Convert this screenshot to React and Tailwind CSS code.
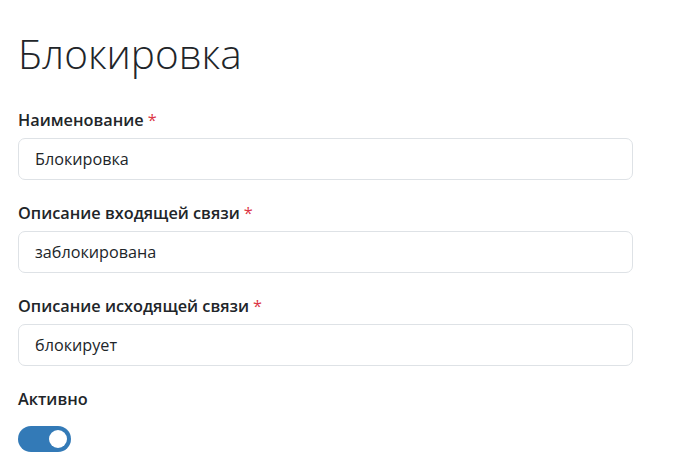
import React, { useState } from "react";

const fields = [
  { id: "name", label: "Наименование", value: "Блокировка" },
  { id: "inbound", label: "Описание входящей связи", value: "заблокирована" },
  { id: "outbound", label: "Описание исходящей связи", value: "блокирует" },
];

export default function App() {
  const [values, setValues] = useState(
    Object.fromEntries(fields.map(f => [f.id, f.value]))
  );
  const [active, setActive] = useState(true);

  return (
    <div
      className="min-h-screen bg-white px-[18px] pt-[28px] text-[#212529]"
      style={{ fontFamily: '"Open Sans", "Noto Sans", sans-serif' }}
    >
      <h1 className="text-[40.5px] font-light leading-[52px] mb-[28px]">Блокировка</h1>

      <form className="w-[615px]">
        {fields.map(f => (
          <div key={f.id} className="mb-[21px]">
            <label htmlFor={f.id} className="block text-[16.3px] font-semibold leading-[24px] mb-[6px]">
              {f.label}
              <span className="ml-[4px] text-[#dc3545] font-normal">*</span>
            </label>
            <input
              id={f.id}
              value={values[f.id]}
              onChange={e => setValues({ ...values, [f.id]: e.target.value })}
              className="block w-full h-[42px] rounded-[7px] border border-[#dee2e6] px-[16px] text-[16.2px] text-[#212529] outline-none"
            />
          </div>
        ))}

        <div>
          <div className="text-[16.3px] font-semibold leading-[24px] mb-[15px]">Активно</div>
          <button
            type="button"
            onClick={() => setActive(!active)}
            className={`relative block w-[53px] h-[26px] rounded-full ${active ? "bg-[#337ab7]" : "bg-[#ced4da]"}`}
          >
            <span
              className={`absolute top-[4px] w-[18px] h-[18px] rounded-full bg-white ${active ? "left-[31px]" : "left-[4px]"}`}
            />
          </button>
        </div>
      </form>
    </div>
  );
}
